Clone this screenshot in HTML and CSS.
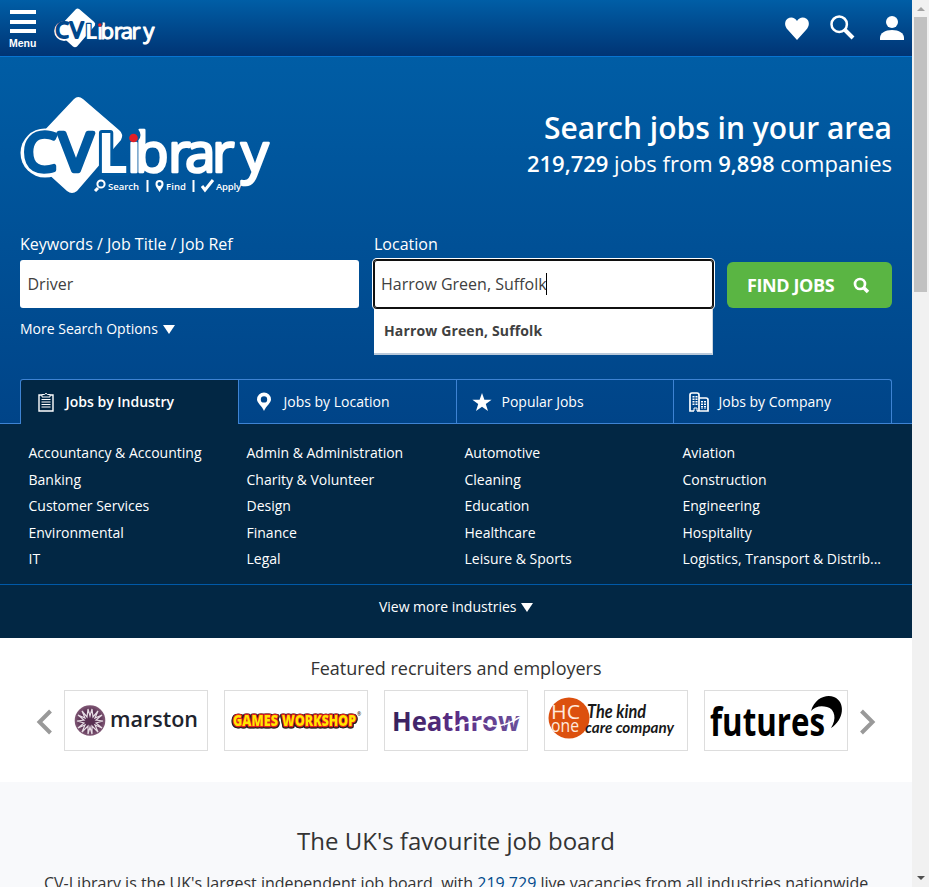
FILE: index.html
```html
<!DOCTYPE html>
<html lang="en">
<head>
<meta charset="utf-8">
<title>CV-Library</title>
<link rel="stylesheet" href="styles.css">
</head>
<body>
<svg class="defs" aria-hidden="true">
  <symbol id="wordmark" viewBox="0 0 250 97" overflow="visible">
    <path fill="#fff" d="M54 2q4-4 9 0l36 31q5 4 2 10L57 94q-5 4-10 0L4 55z"/>
    <circle cx="25" cy="56" r="24.5" fill="#fff"/>
    <g font-family="Open Sans, sans-serif" font-size="55" stroke-linejoin="round">
      <g fill="currentColor" stroke="currentColor" stroke-width="4.5">
        <text x="3" y="74" font-size="53" textLength="34" lengthAdjust="spacingAndGlyphs">C</text>
        <text x="39" y="74" font-size="53" textLength="34" lengthAdjust="spacingAndGlyphs">V</text>
      </g>
      <text x="77" y="75.500" font-weight="700" fill="#fff" stroke="currentColor" stroke-width="6" paint-order="stroke">L</text>
      <text x="107 115 148 165 192 221" y="75" fill="#fff" stroke="#fff" stroke-width="2.6">ibrary</text>
    </g>
    <circle cx="113.500" cy="38" r="7" fill="currentColor"/>
    <circle cx="113.500" cy="41" r="4.300" fill="#e01f26"/>
  </symbol>
</svg>
<div class="window">
  <div class="page">
    <header class="topbar">
      <div class="menu"><i></i><i></i><i></i><span>Menu</span></div>
      <svg class="brand" viewBox="0 0 250 97"><use href="#wordmark"/></svg>
      <div class="actions">
        <svg width="24" height="23" viewBox="0 0 24 23"><path fill="#fff" d="M12 23 3 13C-1 9-.5 4 2.500 1.800 6-.8 10 .6 12 4c2-3.400 6-4.800 9.500-2.200C24.500 4 25 9 21 13z"/></svg>
        <svg width="25" height="25" viewBox="0 0 25 25"><g fill="none" stroke="#fff"><circle cx="9.200" cy="9.200" r="7.700" stroke-width="2.500"/><path stroke-width="4" d="m14.500 14.500 8.500 8.500"/></g></svg>
        <svg width="24" height="24" viewBox="0 0 24 24"><g fill="#fff"><circle cx="12" cy="6" r="6"/><path d="M0 24v-2c0-5 5-8 12-8s12 3 12 8v2z"/></g></svg>
      </div>
    </header>

    <section class="hero">
      <div class="intro">
        <div class="logo">
          <svg width="250" height="97" viewBox="0 0 250 97"><use href="#wordmark"/>
            <g fill="none" stroke="#fff" stroke-width="2"><circle cx="81" cy="87" r="3.600"/><path stroke-width="3" d="m78 91-3 3M182 89l3 4 8-10"/><path d="M127.500 83v12M173.500 83v12"/></g>
            <path fill="#fff" fill-rule="evenodd" d="M139.500 95c-2-4-4-5-4-8a4 4 0 0 1 8 0c0 3-2 4-4 8m0-10a2 2 0 1 0 0 4 2 2 0 0 0 0-4"/>
            <g fill="#fff" font-family="Open Sans, sans-serif" font-size="9.500" font-weight="600"><text x="88" y="92.500" textLength="31">Search</text><text x="146" y="92.500" textLength="20">Find</text><text x="196" y="92.500" textLength="25">Apply</text></g>
          </svg>
        </div>
        <div class="headline">
          <h1>Search jobs in your area</h1>
          <p><b>219,729</b> jobs from <b>9,898</b> companies</p>
        </div>
      </div>
      <form class="search">
        <div class="field">
          <label>Keywords / Job Title / Job Ref</label>
          <div class="box">Driver</div>
          <a class="more">More Search Options <i class="caret"></i></a>
        </div>
        <div class="field location">
          <label>Location</label>
          <div class="box focus">Harrow Green, Suffolk<i class="cursor"></i></div>
          <div class="suggest">Harrow Green, Suffolk</div>
        </div>
        <div class="submit">FIND JOBS
          <svg width="17" height="17" viewBox="0 0 17 17"><g fill="none" stroke="#fff"><circle cx="7" cy="7" r="5" stroke-width="2.700"/><path stroke-width="3.600" d="m10.500 10.500 4.500 4.500"/></g></svg>
        </div>
      </form>
      <nav class="tabs">
        <div class="tab active"><svg width="18" height="20" viewBox="0 0 18 20"><g fill="none" stroke="#fff"><path stroke-width="1.400" d="M5 3H2v16h14V3h-3"/><path d="M5 5V2.500h2.500Q9 0 10.500 2.500H13V5zM4.500 7.500h9M4.500 10h9M4.500 12.500h9M4.500 15h9"/></g></svg><span>Jobs by Industry</span></div>
        <div class="tab"><svg width="18" height="20" viewBox="0 0 18 20"><path fill="#fff" fill-rule="evenodd" d="M9 19C7 14 2 11 2 7.500a7 7 0 0 1 14 0C16 11 11 14 9 19M9 4.200a3.200 3.200 0 1 0 0 6.400 3.200 3.200 0 0 0 0-6.400"/></svg><span>Jobs by Location</span></div>
        <div class="tab"><svg width="20" height="20" viewBox="0 0 20 20"><path fill="#fff" d="m10 1 2.400 6.700H19.600l-5.800 4.200 2.200 7-6-4.200-6 4.200 2.200-7L.4 7.700h7.200z"/></svg><span>Popular Jobs</span></div>
        <div class="tab"><svg width="20" height="20" viewBox="0 0 20 20"><g fill="none" stroke="#fff"><path stroke-width="1.700" d="M5 19H1V3q0-2 2-2h5q2 0 2 2v16H8M10 6h7q2 0 2 2v11h-9"/><path stroke-width="2" stroke-dasharray="1.500 1" d="M4.500 4v10M7.500 4v10M13 9v8M16 9v8"/><path d="M5 19v-3h3v3"/></g></svg><span>Jobs by Company</span></div>
      </nav>
    </section>

    <section class="industries">
      <div class="lists">
        <ul><li>Accountancy &amp; Accounting</li><li>Banking</li><li>Customer Services</li><li>Environmental</li><li>IT</li></ul>
        <ul><li>Admin &amp; Administration</li><li>Charity &amp; Volunteer</li><li>Design</li><li>Finance</li><li>Legal</li></ul>
        <ul><li>Automotive</li><li>Cleaning</li><li>Education</li><li>Healthcare</li><li>Leisure &amp; Sports</li></ul>
        <ul><li>Aviation</li><li>Construction</li><li>Engineering</li><li>Hospitality</li><li>Logistics, Transport &amp; Distrib...</li></ul>
      </div>
      <a class="view-more">View more industries <i class="caret"></i></a>
    </section>

    <section class="featured">
      <h2>Featured recruiters and employers</h2>
      <div class="carousel">
        <svg class="arrow" width="16" height="26" viewBox="0 0 16 26"><path fill="none" stroke="#999" stroke-width="4" d="M14.500 2 3.500 13l11 11"/></svg>
        <div class="cards">
          <div class="card"><svg viewBox="1 1 142 59"><defs><radialGradient id="plum"><stop offset=".6" stop-color="#583052"/><stop offset="1" stop-color="#805875"/></radialGradient></defs><circle cx="26" cy="30.500" r="15.300" fill="url(#plum)"/><path fill="none" stroke="#e6dce4" stroke-width="1.200" d="m26 26-2-7-1 8-5-6 3 7-7-3 6 5-7 1 7 2-6 5 7-3-3 7 6-6v8l2-7 2 7v-8l6 6-3-7 7 3-6-5 7-2-7-1 6-5-7 3 3-7-5 6-1-8z"/><text x="46" y="36.500" font-family="Open Sans, sans-serif" font-size="21.500" font-weight="600" fill="#20232d" textLength="88" lengthAdjust="spacingAndGlyphs">marston</text></svg></div>
          <div class="card"><svg viewBox="1 1 142 59"><g class="workshop" font-family="Open Sans, sans-serif" font-weight="800" font-size="15.500" fill="#ffe600" stroke="#e3201c" stroke-width="2.500" paint-order="stroke" stroke-linejoin="round"><text x="9" y="35.500" textLength="45" lengthAdjust="spacingAndGlyphs">GAMES</text><text x="58" y="35.500" textLength="74" lengthAdjust="spacingAndGlyphs">WORKSHOP</text></g><text x="133" y="26" font-size="5" font-family="Open Sans, sans-serif">®</text></svg></div>
          <div class="card"><svg viewBox="1 1 142 59"><defs><linearGradient id="violet"><stop stop-color="#35215a"/><stop offset=".5" stop-color="#5b2d86"/><stop offset="1" stop-color="#6b519a"/></linearGradient></defs><text x="8" y="41" font-family="Open Sans, sans-serif" font-size="27" font-weight="700" fill="url(#violet)" textLength="128" lengthAdjust="spacingAndGlyphs">Heathrow</text><path fill="none" stroke="#fff" stroke-width="1.500" d="M68 38q20-10 34-4t34-7"/></svg></div>
          <div class="card"><svg viewBox="1 1 142 59"><circle cx="25" cy="28" r="20.500" fill="#dc500e"/><g font-family="Open Sans, sans-serif" fill="#ffe9dc" font-weight="400"><text x="7" y="29" font-size="20" textLength="29" lengthAdjust="spacingAndGlyphs">HC</text><text x="7" y="42" font-size="18" textLength="28" lengthAdjust="spacingAndGlyphs">one</text></g><g font-family="Lato, sans-serif" font-style="italic" font-weight="700" fill="#191919"><text x="43" y="28" font-size="18" textLength="59" lengthAdjust="spacingAndGlyphs">The kind</text><text x="41" y="43" font-size="16" textLength="89" lengthAdjust="spacingAndGlyphs">care company</text></g></svg></div>
          <div class="card"><svg viewBox="1 1 142 59"><text x="6" y="46" font-family="Open Sans, sans-serif" font-size="39" font-weight="700" fill="#000" textLength="115" lengthAdjust="spacingAndGlyphs">futures</text><path d="M107 21C111 8 122 4 130 7c12 5 10 23-3 31 6-9 4-19-4-21-7-2-12 0-16 4"/></svg></div>
        </div>
        <svg class="arrow" width="16" height="26" viewBox="0 0 16 26"><path fill="none" stroke="#999" stroke-width="4" d="m1.500 2 11 11-11 11"/></svg>
      </div>
    </section>

    <section class="about">
      <h2>The UK's favourite job board</h2>
      <p>CV-Library is the UK's largest independent job board, with <a>219,729</a> live vacancies from all industries nationwide.</p>
    </section>
  </div>
  <div class="scrollbar"><i class="up"></i><i class="thumb"></i><i class="down"></i></div>
</div>
</body>
</html>
```
FILE: styles.css
```css
* { box-sizing: border-box; }
body { margin: 0; font-family: "Open Sans", sans-serif; color: #333; overflow: hidden; }
h1, h2, p, ul { margin: 0; padding: 0; list-style: none; }
svg { display: block; flex: none; overflow: visible; }
.defs { position: absolute; width: 0; height: 0; }
.window { display: flex; width: 929px; height: 887px; overflow: hidden; }
.page { width: 912px; height: 887px; overflow: hidden; }

.topbar { height: 57px; padding: 8px 8px 0 9px; display: flex; align-items: flex-start; background: linear-gradient(#005ea6, #003474); border-bottom: 1px solid #0874d1; }
.menu { width: 28px; margin-right: 17px; padding: 2px 0 0 1px; color: #fff; font: bold 10.500px/14px "Liberation Sans", sans-serif; }
.menu i { display: block; width: 26px; height: 4px; margin-bottom: 5.500px; background: #fff; }
.menu span { display: block; margin: -3px 0 0 -1px; }
.brand { width: 101px; height: 40px; color: #00478b; }
.actions { margin-left: auto; display: flex; align-items: flex-start; padding-top: 8px; }
.actions svg { margin-left: 21px; }
.actions svg:nth-child(1) { margin-top: 1px; }
.actions svg:nth-child(2) { margin-top: -1px; }
.actions svg:nth-child(3) { margin-left: 25px; }

.hero { height: 367px; background: linear-gradient(#005da5, #004488); color: #fff; border-bottom: 1px solid #3e83d3; }
.intro { height: 176px; padding: 40px 20px 0; display: flex; justify-content: space-between; }
.logo { color: #0059a0; }
.headline { text-align: right; padding-top: 11px; }
.headline h1 { font-size: 30px; line-height: 40px; font-weight: 600; }
.headline p { font-size: 22px; line-height: 30px; }
.headline b { font-weight: 600; }
.search { height: 146px; padding: 0 20px; display: flex; }
.field { width: 339px; margin-right: 15px; }
.location { margin-right: 14px; }
.field label { display: block; font-size: 16px; line-height: 22px; height: 27px; }
.box { height: 48px; display: flex; align-items: center; padding: 0 7.500px; background: #fff; color: #404040; border-radius: 3px; font-size: 16px; }
.focus { position: relative; padding: 0 7px; box-shadow: inset 0 0 0 1px #101010, 0 0 0 1px #101010, 0 0 0 2px #fff; z-index: 1; }
.cursor { width: 1px; height: 22px; margin-left: -1px; background: #000; }
.more { display: block; margin-top: 11px; font-size: 14px; line-height: 20px; }
.caret { display: inline-block; margin-left: 1px; border: 6px solid transparent; border-top: 9px solid #fff; border-bottom: 0; }
.suggest { height: 47px; padding-left: 10px; background: #fff; color: #404040; border-bottom: 2px solid #b9c9da; border-right: 1px solid #ccd5df; font-size: 14px; font-weight: 700; line-height: 45px; letter-spacing: .14px; }
.submit { width: 165px; height: 46px; margin-top: 29px; padding: 0 22px 0 20px; display: flex; align-items: center; justify-content: space-between; border-radius: 6px; background: #5ab543; font-size: 18px; font-weight: 700; letter-spacing: -.4px; }
.tabs { margin: 0 20px; display: grid; grid-template-columns: 219px 218px 217px 218px; height: 45px; }
.tab { height: 44px; display: flex; align-items: center; padding-left: 16px; border: 1px solid #3e83d3; border-width: 1px 1px 0 0; font-size: 14px; }
.tab:first-child { border-left-width: 1px; border-radius: 3px 0 0; }
.tab:last-child { border-top-right-radius: 3px; padding-left: 15px; }
.tab:nth-child(3) { padding-left: 15px; }
.tab svg + span { margin-left: 10.500px; }
.tab svg[width="20"] + span { margin-left: 9.500px; }
.active { height: 45px; padding-bottom: 1px; background: #022744; font-weight: 600; }

.industries { height: 214px; background: #022744; color: #fff; font-size: 14px; }
.lists { height: 161px; padding: 16px 11.500px 0 28.500px; display: grid; grid-template-columns: repeat(4, 218px); border-bottom: 1px solid #0059a8; }
.lists li { line-height: 26.500px; white-space: nowrap; }
.view-more { display: block; line-height: 20px; padding-top: 12px; text-align: center; }

.featured { height: 144px; padding-top: 17px; }
.featured h2 { text-align: center; font-size: 18px; line-height: 26px; font-weight: 400; }
.carousel { display: flex; align-items: center; margin-top: 9px; padding: 0 36px; justify-content: space-between; }
.arrow { margin-top: 3px; }
.cards { display: flex; gap: 16px; }
.card { width: 144px; height: 61px; border: 1px solid #ddd; }
.workshop { filter: drop-shadow(1px 0 0 #252020) drop-shadow(-1px 0 0 #252020) drop-shadow(0 1px 0 #252020); }

.about { height: 105px; padding-top: 42px; background: #f8f9fb; white-space: nowrap; }
.about h2 { text-align: center; font-size: 24px; line-height: 34px; font-weight: 400; }
.about p { margin: 13px 0 0 44px; font-size: 16px; line-height: 24px; }
.about a { color: #004a8c; }

.scrollbar { width: 17px; height: 887px; background: #f1f1f1; display: flex; flex-direction: column; align-items: center; }
.up { margin: 7px 0 6px; border: 4px solid transparent; border-bottom-color: #a3a3a3; border-top: 0; }
.thumb { width: 13px; height: 275px; background: #c1c1c1; }
.down { margin: auto 0 7px; border: 4px solid transparent; border-top-color: #505050; border-bottom: 0; }
```
